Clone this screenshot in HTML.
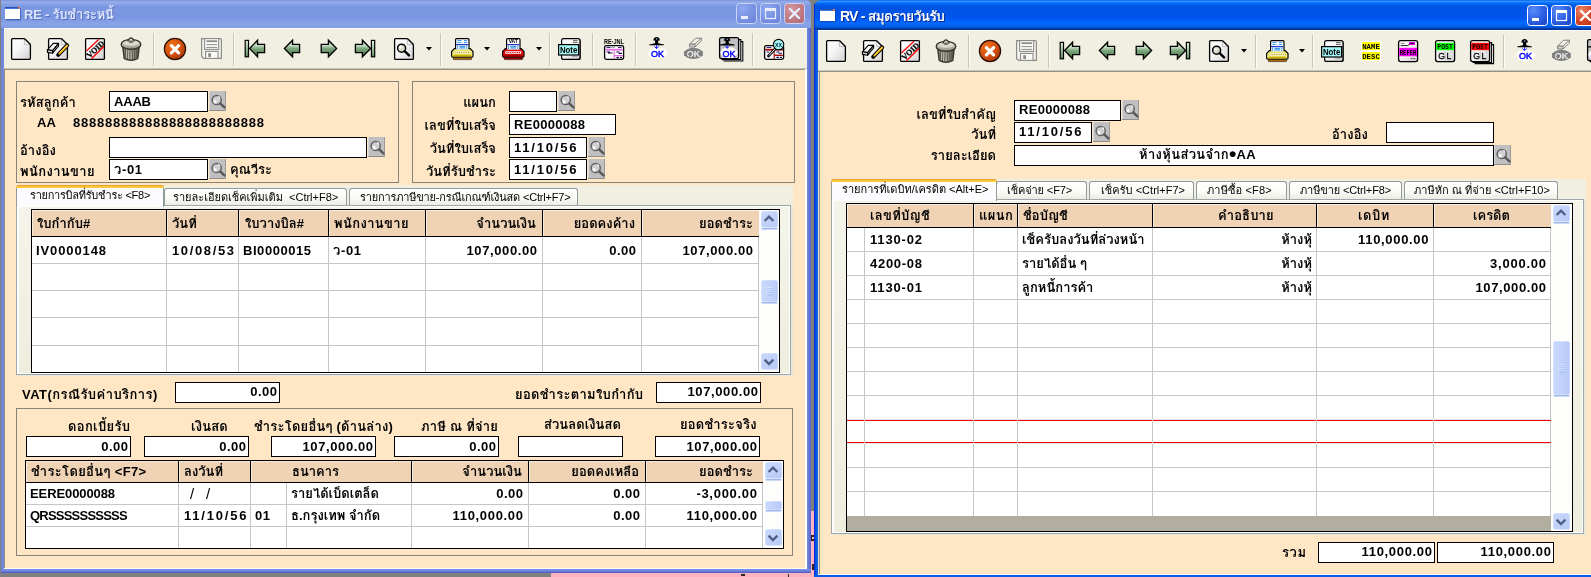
<!DOCTYPE html>
<html lang="th"><head><meta charset="utf-8"><title>RE - รับชำระหนี้ / RV - สมุดรายวันรับ</title>
<style>
html,body{margin:0;padding:0}
body{width:1591px;height:577px;overflow:hidden;position:relative;background:#808080;font-family:"Liberation Sans","Loma","Noto Sans Thai Looped","Noto Sans Thai UI","Noto Sans Thai","Tahoma",sans-serif;}
#root{position:absolute;left:0;top:0;width:1591px;height:577px;overflow:hidden;background:#808080;will-change:transform}
#root div{position:absolute;box-sizing:border-box}
#root svg{position:absolute;overflow:visible}
.t{font:bold 13px/16px "Liberation Sans","Loma","Noto Sans Thai Looped","Noto Sans Thai UI","Noto Sans Thai","Tahoma",sans-serif;white-space:pre;color:#000}
</style></head><body><div id="root">
<div style="left:551px;top:511px;width:1040px;height:66px;background:#FFB3C0;"></div>
<div style="left:0px;top:0px;width:811px;height:573px;background:#808080;"></div>
<div style="left:811px;top:535px;width:3px;height:6px;background:#30262a;"></div>
<div style="left:812px;top:537px;width:2px;height:2px;background:#FFB3C0;"></div>
<div style="left:812px;top:564px;width:2px;height:6px;background:#30262a;"></div>
<div style="left:741px;top:574px;width:4px;height:2px;background:#30262a;"></div>
<div style="left:788px;top:574px;width:1px;height:3px;background:#30262a;"></div>
<div style="left:1px;top:0px;width:810px;height:573px;border-radius:0 5px 0 0;background:linear-gradient(to right,#6E83D6,#7489DA 3px,#7389DE 806px,#5563CC 810px);"></div>
<div style="left:1px;top:569px;width:810px;height:4px;background:linear-gradient(#7B93E4,#6F83DC 50%,#4A55C4);"></div>
<div style="left:1px;top:0px;width:810px;height:28px;border-radius:0 5px 0 0;background:linear-gradient(to bottom,#7A92DC 0,#98AEEA 7%,#8AA3E6 14%,#7C97E1 24%,#7A95E0 60%,#8AA4E8 86%,#829BE3 100%);"></div>
<svg style="left:5px;top:7px" width="17" height="14" viewBox="0 0 17 14"><rect x="1" y="1.5" width="15" height="12" fill="#1A3E9E" opacity=".55"/><rect x="0" y="0" width="15" height="12" fill="#fff"/><rect x="0" y="0" width="15" height="2" fill="#3A78E0"/><rect x="0" y="0" width="15" height="1" fill="#2A50B0"/><rect x="13" y="0" width="2" height="1.6" fill="#E8703A"/></svg>
<div class="t" style="top:7px;left:24px;letter-spacing:-0.23px;color:#DDE6FA;text-shadow:1px 1px 0 rgba(60,80,170,.6);">RE - รับชำระหนี้</div>
<svg style="left:736px;top:3px" width="21" height="21" viewBox="0 0 21 21"><defs><radialGradient id="tbmin0" cx=".3" cy=".25" r=".9"><stop offset="0" stop-color="#8FA8EE"/><stop offset=".55" stop-color="#7A93E4"/><stop offset="1" stop-color="#6C84DA"/></radialGradient></defs><rect x="0.5" y="0.5" width="20" height="20" rx="3" fill="url(#tbmin0)" stroke="#C9D6F6" stroke-width="1"/><rect x="5" y="13" width="7" height="3" fill="#E8EEFC"/></svg>
<svg style="left:760px;top:3px" width="21" height="21" viewBox="0 0 21 21"><defs><radialGradient id="tbmax0" cx=".3" cy=".25" r=".9"><stop offset="0" stop-color="#8FA8EE"/><stop offset=".55" stop-color="#7A93E4"/><stop offset="1" stop-color="#6C84DA"/></radialGradient></defs><rect x="0.5" y="0.5" width="20" height="20" rx="3" fill="url(#tbmax0)" stroke="#C9D6F6" stroke-width="1"/><rect x="5.5" y="6.5" width="10" height="9" fill="none" stroke="#E8EEFC" stroke-width="1.2"/><rect x="5" y="5" width="11" height="3" fill="#E8EEFC"/></svg>
<svg style="left:784px;top:3px" width="21" height="21" viewBox="0 0 21 21"><defs><radialGradient id="tbclose0" cx=".3" cy=".25" r=".9"><stop offset="0" stop-color="#D4949C"/><stop offset=".55" stop-color="#C27C86"/><stop offset="1" stop-color="#B46C78"/></radialGradient></defs><rect x="0.5" y="0.5" width="20" height="20" rx="3" fill="url(#tbclose0)" stroke="#C9D6F6" stroke-width="1"/><path d="M6 6 L15 15 M15 6 L6 15" stroke="#E8EEFC" stroke-width="2.4" stroke-linecap="round"/></svg>
<div style="left:4px;top:28px;width:803px;height:541px;background:#FFE7C6;"></div>
<div style="left:4px;top:28px;width:803px;height:40px;background:#F1EFE2;"></div>
<div style="left:4px;top:28px;width:803px;height:1px;background:#FFFFFF;"></div>
<div style="left:4px;top:68px;width:803px;height:1px;background:#C9C6B6;"></div>
<div style="left:4px;top:69px;width:803px;height:1px;background:#8F8F86;"></div>
<div style="left:4px;top:70px;width:1px;height:498px;background:#8F8F86;"></div>
<div style="left:805px;top:69px;width:2px;height:500px;background:#FFFFFF;"></div>
<div style="left:4px;top:568px;width:803px;height:1px;background:#FFFFFF;"></div>
<svg style="left:4px;top:28px" width="803" height="41" viewBox="4 28 803 41"><defs><linearGradient id="pg" x1="0" y1="0" x2="1" y2="1"><stop offset="0" stop-color="#FFFFFF"/><stop offset=".45" stop-color="#F6F6F6"/><stop offset="1" stop-color="#CFCFCF"/></linearGradient><linearGradient id="gr" x1="0" y1="0" x2="0" y2="1"><stop offset="0" stop-color="#5E8A5E"/><stop offset=".28" stop-color="#CFE3CF"/><stop offset=".5" stop-color="#7FA87F"/><stop offset="1" stop-color="#3F6B3F"/></linearGradient><linearGradient id="gb" x1="0" y1="0" x2="0" y2="1"><stop offset="0" stop-color="#E8F2E8"/><stop offset=".45" stop-color="#A8C8A8"/><stop offset="1" stop-color="#5C885C"/></linearGradient><radialGradient id="rx" cx=".35" cy=".3" r=".8"><stop offset="0" stop-color="#F0701A"/><stop offset=".6" stop-color="#D04E10"/><stop offset="1" stop-color="#9C3206"/></radialGradient><linearGradient id="tr" x1="0" y1="0" x2="1" y2="0"><stop offset="0" stop-color="#55544A"/><stop offset=".28" stop-color="#CFCDBF"/><stop offset=".6" stop-color="#9E9C8E"/><stop offset="1" stop-color="#4A493F"/></linearGradient><linearGradient id="tl" x1="0" y1="0" x2="0" y2="1"><stop offset="0" stop-color="#ECEADD"/><stop offset="1" stop-color="#8F8D7F"/></linearGradient></defs><path d="M12.6 38.6 H24.4 L30.4 44.6 V58.4 Q30.4 59.4 29.4 59.4 H12.6 Q11.6 59.4 11.6 58.4 V39.6 Q11.6 38.6 12.6 38.6 Z" fill="url(#pg)" stroke="#000" stroke-width="1.3"/><path d="M24.4 38.6 V44.6 H30.4 Z" fill="#F4F4F4" stroke="#9A9A9A" stroke-width=".6"/><path d="M24.4 38.6 L30.4 44.6" stroke="#000" stroke-width="1.3"/><path d="M49.6 38.6 H61.400000000000006 L67.4 44.6 V58.4 Q67.4 59.4 66.4 59.4 H49.6 Q48.6 59.4 48.6 58.4 V39.6 Q48.6 38.6 49.6 38.6 Z" fill="url(#pg)" stroke="#000" stroke-width="1.3"/><path d="M61.400000000000006 38.6 V44.6 H67.4 Z" fill="#F4F4F4" stroke="#9A9A9A" stroke-width=".6"/><path d="M61.400000000000006 38.6 L67.4 44.6" stroke="#000" stroke-width="1.3"/><path d="M47.4 49.8 L53.2 43.4 H58.6 L52.6 50.6 Z" fill="#F6F6F6" stroke="#000" stroke-width="1.1" stroke-linejoin="round"/><path d="M47.4 49.8 L52.6 50.6 V53.2 L47.4 52.4 Z" fill="#D4D4D4" stroke="#000" stroke-width="1.1" stroke-linejoin="round"/><path d="M52.6 53.2 L58.6 46 V43.4 L52.6 50.6 Z" fill="#BDBDBD" stroke="#000" stroke-width="1.1" stroke-linejoin="round"/><path d="M58.2 54.8 L67.2 45.4" stroke="#000" stroke-width="4" stroke-linecap="round"/><path d="M59.4 53.6 L67.2 45.5" stroke="#F5B914" stroke-width="2" stroke-linecap="round"/><path d="M59.8 52.6 L66.6 45.4" stroke="#FFE27A" stroke-width=".7"/><path d="M86.6 38.6 H103.4 Q104.4 38.6 104.4 39.6 V58.4 Q104.4 59.4 103.4 59.4 H86.6 Q85.6 59.4 85.6 58.4 V39.6 Q85.6 38.6 86.6 38.6 Z" fill="url(#pg)" stroke="#000" stroke-width="1.3"/><path d="M86.4 51 L99 39.2" stroke="#FF1010" stroke-width="1.5"/><path d="M91.4 58.8 L104 46.4" stroke="#FF1010" stroke-width="1.5"/><text x="95.6" y="49.4" transform="rotate(-44 95.6 49.4)" text-anchor="middle" dominant-baseline="central" font-family="'Liberation Serif',serif" font-weight="bold" font-size="8" letter-spacing=".1" fill="#000" stroke="#000" stroke-width=".25">VOID</text><path d="M122.8 47 L124.2 58.4 Q131 62.2 137.8 58.4 L139.2 47 Z" fill="url(#tr)" stroke="#35342C" stroke-width="1.4"/><path d="M125.6 49.4 L125.3 59.4" stroke="#5A594F" stroke-width="1"/><path d="M127.8 49.4 L127.5 59.4" stroke="#5A594F" stroke-width="1"/><path d="M130.0 49.4 L129.7 59.4" stroke="#5A594F" stroke-width="1"/><path d="M132.2 49.4 L132.5 59.4" stroke="#5A594F" stroke-width="1"/><path d="M134.4 49.4 L134.7 59.4" stroke="#5A594F" stroke-width="1"/><path d="M136.6 49.4 L136.9 59.4" stroke="#5A594F" stroke-width="1"/><ellipse cx="131" cy="44.4" rx="9.8" ry="4.9" fill="url(#tl)" stroke="#35342C" stroke-width="1.4"/><ellipse cx="131" cy="43" rx="7.6" ry="3" fill="#E3E1D4" opacity=".7"/><path d="M127.6 41.4 Q131 34.4 134.4 41.4" fill="#D8D6C8" stroke="#35342C" stroke-width="1.4"/><ellipse cx="131" cy="41.8" rx="2.4" ry="1.3" fill="#6E6D62"/><rect x="153" y="33" width="1" height="33" fill="#C9C6B6"/><rect x="154" y="33" width="1" height="33" fill="#FBFAF4"/><circle cx="175" cy="49" r="10.6" fill="url(#rx)" stroke="#2A0E00" stroke-width="1.2"/><path d="M171.4 45.6 L178.6 52.8 M178.6 45.6 L171.4 52.8" stroke="#fff" stroke-width="3.2" stroke-linecap="round"/><path d="M201.6 38.6 H220.4 Q221.4 38.6 221.4 39.6 V58.4 H203.6 L201.6 56.4 Z" fill="#F4F3EA" stroke="#8C8C8C" stroke-width="1.2"/><rect x="204.6" y="38.6" width="14" height="10.8" fill="#FAFAF6" stroke="#8C8C8C" stroke-width="1.1"/><path d="M206.4 41.2 H217" stroke="#8C8C8C" stroke-width="1.8"/><path d="M206.4 44.6 H217 M206.4 47.4 H217" stroke="#8C8C8C" stroke-width="1"/><rect x="205.6" y="51.4" width="12.4" height="7" fill="#FAFAF6" stroke="#8C8C8C" stroke-width="1.1"/><rect x="208.2" y="53.2" width="2.8" height="3.8" fill="#8C8C8C"/><rect x="233" y="33" width="1" height="33" fill="#C9C6B6"/><rect x="234" y="33" width="1" height="33" fill="#FBFAF4"/><path d="M249.6 48.5 L257.6 40.2 V44.4 H264.6 V52.6 H257.6 V56.8 Z" fill="url(#gr)" stroke="#000" stroke-width="1.3" stroke-linejoin="miter"/><rect x="245.2" y="40.4" width="3.3" height="16.4" fill="url(#gb)" stroke="#000" stroke-width="1.2"/><path d="M284.4 48.5 L292.6 40.2 V44.4 H299.6 V52.6 H292.6 V56.8 Z" fill="url(#gr)" stroke="#000" stroke-width="1.3" stroke-linejoin="miter"/><path d="M336.6 48.5 L328.4 40.2 V44.4 H321.2 V52.6 H328.4 V56.8 Z" fill="url(#gr)" stroke="#000" stroke-width="1.3" stroke-linejoin="miter"/><path d="M370.6 48.5 L362.4 40.2 V44.4 H355.4 V52.6 H362.4 V56.8 Z" fill="url(#gr)" stroke="#000" stroke-width="1.3" stroke-linejoin="miter"/><rect x="371.40000000000003" y="40.4" width="3.3" height="16.4" fill="url(#gb)" stroke="#000" stroke-width="1.2"/><path d="M395.6 38.6 H407.4 L413.4 44.6 V58.4 Q413.4 59.4 412.4 59.4 H395.6 Q394.6 59.4 394.6 58.4 V39.6 Q394.6 38.6 395.6 38.6 Z" fill="url(#pg)" stroke="#000" stroke-width="1.3"/><path d="M407.4 38.6 V44.6 H413.4 Z" fill="#F4F4F4" stroke="#9A9A9A" stroke-width=".6"/><path d="M407.4 38.6 L413.4 44.6" stroke="#000" stroke-width="1.3"/><circle cx="401.6" cy="48.2" r="4" fill="#D9DACB" stroke="#000" stroke-width="1.5"/><circle cx="400.6" cy="47.2" r="1.6" fill="#F6F6EE" opacity=".9"/><path d="M404.6 51.2 L409 55.4" stroke="#000" stroke-width="2.4" stroke-linecap="round"/><path d="M426 47 H432 L429 50.4 Z" fill="#000"/><rect x="440" y="33" width="1" height="33" fill="#C9C6B6"/><rect x="441" y="33" width="1" height="33" fill="#FBFAF4"/><rect x="455.6" y="38.6" width="13.4" height="11" rx="1" fill="#fff" stroke="#000" stroke-width="1.2"/><path d="M457.4 40.6 H461.4 M464 40.6 H467.2 M457.4 42.6 H460.4 M461.6 42.6 H462.4 M464 42.6 H467.2" stroke="#2A96E8" stroke-width="1"/><rect x="456.2" y="44" width="12.2" height="1.2" fill="#2A34C8"/><path d="M457.6 45.4 V48.6 M466.8 45.4 V48.6" stroke="#2A96E8" stroke-width="1"/><rect x="459.4" y="45.8" width="5.8" height="2.6" fill="#3E9CE6"/><path d="M454.4 48.6 H470.2 L473 51.6 V56 Q473 57.2 471.6 57.2 H453 Q451.6 57.2 451.6 56 V51.6 Z" fill="#F8F27E" stroke="#000" stroke-width="1.2"/><rect x="455.6" y="38.9" width="13.4" height="10.4" fill="none"/><rect x="456.2" y="46" width="12.2" height="3.2" fill="#fff" opacity="0"/><path d="M453.2 55.6 H471.4" stroke="#C7B200" stroke-width="1.6"/><rect x="454" y="51" width="16.4" height="3" rx=".6" fill="#fff" stroke="#C7B200" stroke-width=".5"/><path d="M455.4 52.5 H469.2" stroke="#C0A000" stroke-width="1" stroke-dasharray="1 .8"/><rect x="453.2" y="57.6" width="18.4" height="2" rx=".6" fill="#B86E00" stroke="#000" stroke-width=".5"/><rect x="456.2" y="47.6" width="12.2" height="2" fill="#fff"/><path d="M457.6 47.6 V49 M466.8 47.6 V49" stroke="#2A96E8" stroke-width="1"/><rect x="459.4" y="47.6" width="5.8" height="1" fill="#3E9CE6"/><path d="M484 47 H490 L487 50.4 Z" fill="#000"/><rect x="506.6" y="38.6" width="13.4" height="11" rx="1" fill="#fff" stroke="#000" stroke-width="1.2"/><text x="513.3" y="43.2" text-anchor="middle" font-family="'Liberation Sans',sans-serif" font-weight="bold" font-size="5" fill="#000">VAT</text><rect x="507.2" y="44" width="12.2" height="1.2" fill="#2A34C8"/><path d="M508.6 45.4 V48.6 M517.8 45.4 V48.6" stroke="#2A96E8" stroke-width="1"/><rect x="510.4" y="45.8" width="5.8" height="2.6" fill="#3E9CE6"/><path d="M505.4 48.6 H521.2 L524 51.6 V56 Q524 57.2 522.6 57.2 H504 Q502.6 57.2 502.6 56 V51.6 Z" fill="#F40808" stroke="#000" stroke-width="1.2"/><rect x="506.6" y="38.9" width="13.4" height="10.4" fill="none"/><rect x="507.2" y="46" width="12.2" height="3.2" fill="#fff" opacity="0"/><path d="M504.2 55.6 H522.4" stroke="#A00000" stroke-width="1.6"/><rect x="505" y="51" width="16.4" height="3" rx=".6" fill="#fff" stroke="#A00000" stroke-width=".5"/><path d="M506.4 52.5 H520.2" stroke="#E00000" stroke-width="1" stroke-dasharray="1 .8"/><rect x="504.2" y="57.6" width="18.4" height="2" rx=".6" fill="#A80000" stroke="#000" stroke-width=".5"/><rect x="507.2" y="47.6" width="12.2" height="2" fill="#fff"/><path d="M508.6 47.6 V49 M517.8 47.6 V49" stroke="#2A96E8" stroke-width="1"/><rect x="510.4" y="47.6" width="5.8" height="1" fill="#3E9CE6"/><path d="M536 47 H542 L539 50.4 Z" fill="#000"/><rect x="549" y="33" width="1" height="33" fill="#C9C6B6"/><rect x="550" y="33" width="1" height="33" fill="#FBFAF4"/><rect x="563" y="39" width="18" height="21" rx="2" fill="#555"/><rect x="561.6" y="38.6" width="18.4" height="20.8" rx="2" fill="url(#pg)" stroke="#000" stroke-width="1.2"/><path d="M573 40.6 H577.6 M573 42.4 H577.6" stroke="#555" stroke-width=".9"/><path d="M572 56.4 H577.6" stroke="#999" stroke-width=".8"/><rect x="558.6" y="44.6" width="20" height="10.4" fill="#A4F4F4" stroke="#000" stroke-width="1.2"/><text x="568.6" y="53.2" text-anchor="middle" font-family="'Liberation Sans',sans-serif" font-weight="bold" font-size="9.6" textLength="17.4" lengthAdjust="spacingAndGlyphs" fill="#000">Note</text><rect x="592" y="33" width="1" height="33" fill="#C9C6B6"/><rect x="593" y="33" width="1" height="33" fill="#FBFAF4"/><text x="614" y="44" text-anchor="middle" font-family="'Liberation Sans',sans-serif" font-weight="bold" font-size="6.6" textLength="20" lengthAdjust="spacingAndGlyphs" fill="#000">RE·JNL</text><rect x="604.6" y="45.6" width="19" height="13.8" rx="1.8" fill="#fff" stroke="#000" stroke-width="1.3"/><rect x="605.4" y="48.8" width="17.4" height="1.8" fill="#E46AE4"/><rect x="613.6" y="50.6" width="1.1" height="8.2" fill="#E46AE4"/><rect x="614.4" y="55" width="8.4" height="1.4" fill="#E46AE4"/><path d="M606.6 47.4 H610.4 M611.6 47.4 H612.4 M613.6 47.4 H614.4 M618 47.4 H621.6" stroke="#1A1A60" stroke-width="1"/><path d="M606.6 52 H610 M608 53 H612.6 M616.4 52 H619.4 M618.6 53.4 H622" stroke="#101040" stroke-width="1.1"/><path d="M616.4 57.6 H619 M620 57.6 H622" stroke="#101040" stroke-width="1.1"/><rect x="635" y="33" width="1" height="33" fill="#C9C6B6"/><rect x="636" y="33" width="1" height="33" fill="#FBFAF4"/><ellipse cx="657.6" cy="53.2" rx="9.6" ry="5.8" fill="#fff"/><path d="M654.0 38.2 Q656.6 35.8 659.2 38.2 L660.0 40.6 H658.2 V43.2 L664.0 44.4 V45.2 H649.2 V44.4 L655.0 43.2 V40.6 H653.2 Z" fill="#000"/><rect x="656.0" y="38.4" width="1.2" height="1.2" fill="#9CC8F8"/><path d="M656.6 45.2 V48.4 M654.4 46.4 L656.6 48.6 L658.8000000000001 46.4" stroke="#0000FF" stroke-width=".9" fill="none"/><text x="657.6" y="56.8" text-anchor="middle" font-family="'Liberation Sans',sans-serif" font-size="9.2" textLength="13" lengthAdjust="spacingAndGlyphs" fill="#0000FF" stroke="#0000FF" stroke-width=".45">OK</text><ellipse cx="693.4" cy="53.4" rx="9.4" ry="5.6" fill="#808080"/><circle cx="684.8" cy="52" r="1" fill="#808080"/><circle cx="684.8" cy="55" r="1" fill="#808080"/><circle cx="702" cy="52" r="1" fill="#808080"/><circle cx="702" cy="55" r="1" fill="#808080"/><path d="M689.6 44.2 L695.6 38.2 H701.4 L695 44.2 Z" fill="#F1EFE2" stroke="#808080" stroke-width="1"/><path d="M689.6 44.2 H695 V47 H689.6 Z" fill="#D8D6CC" stroke="#808080" stroke-width="1"/><path d="M695 47 L701.4 41 V38.2" fill="none" stroke="#808080" stroke-width="1"/><text x="693.6" y="57.2" text-anchor="middle" font-family="'Liberation Sans',sans-serif" font-weight="bold" font-size="9.4" textLength="13.6" lengthAdjust="spacingAndGlyphs" fill="#EEEEEA">OK</text><path d="M689.8 57 V53.6 M688.2 54.8 L689.8 53.2 L691.4 54.8" stroke="#808080" stroke-width="1.1" fill="none"/><path d="M723.6 41.6 H742.8 V61 H723.6" fill="#fff" stroke="#000" stroke-width="1.1"/><path d="M721.6 39.6 H740.8 V59.6 H721.6" fill="#E6E6E6" stroke="#000" stroke-width="1.1"/><rect x="719.6" y="37.6" width="19" height="21" rx="1.6" fill="#C2C2C2" stroke="#000" stroke-width="1.3"/><ellipse cx="729" cy="52.6" rx="8.6" ry="5.6" fill="#fff"/><path d="M724.6 38.400000000000006 Q727.2 36.0 729.8000000000001 38.400000000000006 L730.6 40.800000000000004 H728.8000000000001 V43.400000000000006 L734.6 44.6 V45.400000000000006 H719.8000000000001 V44.6 L725.6 43.400000000000006 V40.800000000000004 H723.8000000000001 Z" fill="#000"/><rect x="726.6" y="38.6" width="1.2" height="1.2" fill="#9CC8F8"/><path d="M727.2 45.4 V48.2 M725.2 46.4 L727.2 48.4 L729.2 46.4" stroke="#0000FF" stroke-width=".9" fill="none"/><text x="729" y="56.6" text-anchor="middle" font-family="'Liberation Sans',sans-serif" font-size="9.2" textLength="13" lengthAdjust="spacingAndGlyphs" fill="#0000FF" stroke="#0000FF" stroke-width=".45">OK</text><rect x="752" y="33" width="1" height="33" fill="#C9C6B6"/><rect x="753" y="33" width="1" height="33" fill="#FBFAF4"/><rect x="764.6" y="45.6" width="19" height="13.8" rx="1.8" fill="#fff" stroke="#000" stroke-width="1.3"/><rect x="765.4" y="48.8" width="17.4" height="1.8" fill="#A80000"/><rect x="773.6" y="50.6" width="1.1" height="8.2" fill="#A80000"/><rect x="774.4" y="54.6" width="8.4" height="1.4" fill="#A80000"/><path d="M766.6 47.4 H771.4" stroke="#1A1A80" stroke-width="1"/><path d="M766.6 52 H769 M776.4 52 H779.4 M778.6 53.2 H782 M776.4 57.4 H779 M780 57.4 H782" stroke="#101060" stroke-width="1.1"/><path d="M768.4 56 L775.4 48.6" stroke="#000" stroke-width="2.6" stroke-linecap="round"/><path d="M769.2 55.2 L775.4 48.6" stroke="#fff" stroke-width="1" stroke-linecap="round"/><circle cx="778.6" cy="44.6" r="5.2" fill="#A4F2F2" stroke="#000" stroke-width="1.1"/><text x="778.6" y="46.8" text-anchor="middle" font-family="'Liberation Sans',sans-serif" font-weight="bold" font-size="6.4" fill="#104050">xx</text></svg>
<div style="left:16px;top:81px;width:383px;height:102px;border:1px solid #85837A;"></div>
<div style="left:412px;top:81px;width:383px;height:102px;border:1px solid #85837A;"></div>
<div class="t" style="top:95px;left:20px;letter-spacing:0.08px;">รหัสลูกค้า</div>
<div style="left:109px;top:91px;width:99px;height:21px;background:#fff;box-shadow:inset 0 0 0 1px #000;"></div>
<div class="t" style="top:94px;left:114px;letter-spacing:-0.19px;">AAAB</div>
<svg style="left:209px;top:91px" width="17" height="20" viewBox="0 0 17 20"><rect x="0" y="0" width="17" height="20" fill="#C0C0C0"/><rect x="0" y="0" width="1" height="20" fill="#D6D6D6"/><rect x="0" y="19" width="17" height="1" fill="#8E8E8E"/><rect x="16" y="0" width="1" height="20" fill="#9A9A9A"/><circle cx="7.7" cy="9" r="4.6" fill="#CFCFCF" stroke="#626262" stroke-width="1.5"/><path d="M8.4 5 L11 5.8 L11.2 8 Z" fill="#fff"/><rect x="4.8" y="9.2" width="2.6" height="3.2" fill="#FAFAFA"/><path d="M11.2 12.4 L15.4 16.4" stroke="#5A5A5A" stroke-width="2.6" stroke-linecap="round"/></svg>
<div class="t" style="top:115px;left:37px;letter-spacing:0.22px;">AA</div>
<div class="t" style="top:115px;left:73px;letter-spacing:0.76px;">888888888888888888888888</div>
<div class="t" style="top:143px;left:20px;letter-spacing:0.06px;">อ้างอิง</div>
<div style="left:109px;top:137px;width:258px;height:21px;background:#fff;box-shadow:inset 0 0 0 1px #000;"></div>
<svg style="left:368px;top:137px" width="17" height="20" viewBox="0 0 17 20"><rect x="0" y="0" width="17" height="20" fill="#C0C0C0"/><rect x="0" y="0" width="1" height="20" fill="#D6D6D6"/><rect x="0" y="19" width="17" height="1" fill="#8E8E8E"/><rect x="16" y="0" width="1" height="20" fill="#9A9A9A"/><circle cx="7.7" cy="9" r="4.6" fill="#CFCFCF" stroke="#626262" stroke-width="1.5"/><path d="M8.4 5 L11 5.8 L11.2 8 Z" fill="#fff"/><rect x="4.8" y="9.2" width="2.6" height="3.2" fill="#FAFAFA"/><path d="M11.2 12.4 L15.4 16.4" stroke="#5A5A5A" stroke-width="2.6" stroke-linecap="round"/></svg>
<div class="t" style="top:164px;left:20px;letter-spacing:0.37px;">พนักงานขาย</div>
<div style="left:109px;top:159px;width:99px;height:21px;background:#fff;box-shadow:inset 0 0 0 1px #000;"></div>
<div class="t" style="top:162px;left:114px;letter-spacing:0.64px;">ว-01</div>
<svg style="left:209px;top:159px" width="17" height="20" viewBox="0 0 17 20"><rect x="0" y="0" width="17" height="20" fill="#C0C0C0"/><rect x="0" y="0" width="1" height="20" fill="#D6D6D6"/><rect x="0" y="19" width="17" height="1" fill="#8E8E8E"/><rect x="16" y="0" width="1" height="20" fill="#9A9A9A"/><circle cx="7.7" cy="9" r="4.6" fill="#CFCFCF" stroke="#626262" stroke-width="1.5"/><path d="M8.4 5 L11 5.8 L11.2 8 Z" fill="#fff"/><rect x="4.8" y="9.2" width="2.6" height="3.2" fill="#FAFAFA"/><path d="M11.2 12.4 L15.4 16.4" stroke="#5A5A5A" stroke-width="2.6" stroke-linecap="round"/></svg>
<div class="t" style="top:162px;left:230px;letter-spacing:-0.01px;">คุณวีระ</div>
<div class="t" style="top:95px;right:1095px;">แผนก</div>
<div style="left:509px;top:91px;width:48px;height:21px;background:#fff;box-shadow:inset 0 0 0 1px #000;"></div>
<svg style="left:558px;top:91px" width="17" height="20" viewBox="0 0 17 20"><rect x="0" y="0" width="17" height="20" fill="#C0C0C0"/><rect x="0" y="0" width="1" height="20" fill="#D6D6D6"/><rect x="0" y="19" width="17" height="1" fill="#8E8E8E"/><rect x="16" y="0" width="1" height="20" fill="#9A9A9A"/><circle cx="7.7" cy="9" r="4.6" fill="#CFCFCF" stroke="#626262" stroke-width="1.5"/><path d="M8.4 5 L11 5.8 L11.2 8 Z" fill="#fff"/><rect x="4.8" y="9.2" width="2.6" height="3.2" fill="#FAFAFA"/><path d="M11.2 12.4 L15.4 16.4" stroke="#5A5A5A" stroke-width="2.6" stroke-linecap="round"/></svg>
<div class="t" style="top:118px;right:1095px;">เลขที่ใบเสร็จ</div>
<div style="left:509px;top:114px;width:107px;height:21px;background:#fff;box-shadow:inset 0 0 0 1px #000;"></div>
<div class="t" style="top:117px;left:514px;letter-spacing:0.29px;">RE0000088</div>
<div class="t" style="top:141px;right:1095px;">วันที่ใบเสร็จ</div>
<div style="left:509px;top:137px;width:78px;height:21px;background:#fff;box-shadow:inset 0 0 0 1px #000;"></div>
<div class="t" style="top:140px;left:514px;letter-spacing:1.8px;">11/10/56</div>
<svg style="left:588px;top:137px" width="17" height="20" viewBox="0 0 17 20"><rect x="0" y="0" width="17" height="20" fill="#C0C0C0"/><rect x="0" y="0" width="1" height="20" fill="#D6D6D6"/><rect x="0" y="19" width="17" height="1" fill="#8E8E8E"/><rect x="16" y="0" width="1" height="20" fill="#9A9A9A"/><circle cx="7.7" cy="9" r="4.6" fill="#CFCFCF" stroke="#626262" stroke-width="1.5"/><path d="M8.4 5 L11 5.8 L11.2 8 Z" fill="#fff"/><rect x="4.8" y="9.2" width="2.6" height="3.2" fill="#FAFAFA"/><path d="M11.2 12.4 L15.4 16.4" stroke="#5A5A5A" stroke-width="2.6" stroke-linecap="round"/></svg>
<div class="t" style="top:164px;right:1095px;">วันที่รับชำระ</div>
<div style="left:509px;top:159px;width:78px;height:21px;background:#fff;box-shadow:inset 0 0 0 1px #000;"></div>
<div class="t" style="top:162px;left:514px;letter-spacing:1.8px;">11/10/56</div>
<svg style="left:588px;top:159px" width="17" height="20" viewBox="0 0 17 20"><rect x="0" y="0" width="17" height="20" fill="#C0C0C0"/><rect x="0" y="0" width="1" height="20" fill="#D6D6D6"/><rect x="0" y="19" width="17" height="1" fill="#8E8E8E"/><rect x="16" y="0" width="1" height="20" fill="#9A9A9A"/><circle cx="7.7" cy="9" r="4.6" fill="#CFCFCF" stroke="#626262" stroke-width="1.5"/><path d="M8.4 5 L11 5.8 L11.2 8 Z" fill="#fff"/><rect x="4.8" y="9.2" width="2.6" height="3.2" fill="#FAFAFA"/><path d="M11.2 12.4 L15.4 16.4" stroke="#5A5A5A" stroke-width="2.6" stroke-linecap="round"/></svg>
<div style="left:16px;top:185px;width:777px;height:190px;background:#F1EFE2;"></div>
<div style="left:16px;top:205px;width:775px;height:170px;background:#FFFFFF;border:1px solid #9DA7A8;"></div>
<div style="left:19px;top:207px;width:770px;height:166px;background:linear-gradient(#F5F4EA,#EFEDDE);"></div>
<div style="left:791px;top:207px;width:2px;height:169px;background:#E9E7DA;"></div>
<div style="left:18px;top:375px;width:775px;height:1px;background:#E9E7DA;"></div>
<div style="left:164px;top:188px;width:183px;height:17px;border:1px solid #919B9C;border-bottom:none;border-radius:3px 3px 0 0;background:linear-gradient(#FFFFFF,#FAFAF6 60%,#ECEBE2);"></div>
<div class="t" style="top:189px;left:173px;font-size:11px;font-weight:normal;letter-spacing:-0.01px;">รายละเอียดเช็คเพิ่มเติม  &lt;Ctrl+F8&gt;</div>
<div style="left:349px;top:188px;width:229px;height:17px;border:1px solid #919B9C;border-bottom:none;border-radius:3px 3px 0 0;background:linear-gradient(#FFFFFF,#FAFAF6 60%,#ECEBE2);"></div>
<div class="t" style="top:189px;left:360px;font-size:11px;font-weight:normal;letter-spacing:-0.19px;">รายการภาษีขาย-กรณีเกณฑ์เงินสด &lt;Ctrl+F7&gt;</div>
<div style="left:16px;top:185px;width:148px;height:22px;background:#FCFCFE;border:1px solid #919B9C;border-bottom:none;border-radius:3px 3px 0 0;"></div>
<div style="left:16px;top:185px;width:148px;height:3px;border-radius:3px 3px 0 0;background:linear-gradient(#E68B2C,#FFC73C 50%,#FFC73C);"></div>
<div class="t" style="top:187px;left:30px;font-size:11px;font-weight:normal;letter-spacing:-0.28px;">รายการบิลที่รับชำระ &lt;F8&gt;</div>
<div style="left:31px;top:209px;width:749px;height:164px;background:#FFFFFF;border:1px solid #000;"></div>
<div style="left:32px;top:210px;width:134px;height:26px;background:#F0D2B4;box-shadow:inset 1px 1px 0 rgba(255,255,255,.55);"></div>
<div style="left:167px;top:210px;width:71px;height:26px;background:#F0D2B4;box-shadow:inset 1px 1px 0 rgba(255,255,255,.55);"></div>
<div style="left:239px;top:210px;width:89px;height:26px;background:#F0D2B4;box-shadow:inset 1px 1px 0 rgba(255,255,255,.55);"></div>
<div style="left:329px;top:210px;width:96px;height:26px;background:#F0D2B4;box-shadow:inset 1px 1px 0 rgba(255,255,255,.55);"></div>
<div style="left:426px;top:210px;width:116px;height:26px;background:#F0D2B4;box-shadow:inset 1px 1px 0 rgba(255,255,255,.55);"></div>
<div style="left:543px;top:210px;width:98px;height:26px;background:#F0D2B4;box-shadow:inset 1px 1px 0 rgba(255,255,255,.55);"></div>
<div style="left:642px;top:210px;width:117px;height:26px;background:#F0D2B4;box-shadow:inset 1px 1px 0 rgba(255,255,255,.55);"></div>
<div style="left:32px;top:236px;width:727px;height:1px;background:#000;"></div>
<div style="left:166px;top:210px;width:1px;height:27px;background:#000;"></div>
<div style="left:166px;top:237px;width:1px;height:135px;background:#C6C6C6;"></div>
<div style="left:238px;top:210px;width:1px;height:27px;background:#000;"></div>
<div style="left:238px;top:237px;width:1px;height:135px;background:#C6C6C6;"></div>
<div style="left:328px;top:210px;width:1px;height:27px;background:#000;"></div>
<div style="left:328px;top:237px;width:1px;height:135px;background:#C6C6C6;"></div>
<div style="left:425px;top:210px;width:1px;height:27px;background:#000;"></div>
<div style="left:425px;top:237px;width:1px;height:135px;background:#C6C6C6;"></div>
<div style="left:542px;top:210px;width:1px;height:27px;background:#000;"></div>
<div style="left:542px;top:237px;width:1px;height:135px;background:#C6C6C6;"></div>
<div style="left:641px;top:210px;width:1px;height:27px;background:#000;"></div>
<div style="left:641px;top:237px;width:1px;height:135px;background:#C6C6C6;"></div>
<div style="left:758px;top:237px;width:1px;height:135px;background:#C6C6C6;"></div>
<div style="left:32px;top:263px;width:727px;height:1px;background:#C6C6C6;"></div>
<div style="left:32px;top:290px;width:727px;height:1px;background:#C6C6C6;"></div>
<div style="left:32px;top:317px;width:727px;height:1px;background:#C6C6C6;"></div>
<div style="left:32px;top:345px;width:727px;height:1px;background:#C6C6C6;"></div>
<div style="left:759px;top:210px;width:20px;height:162px;background:#FDFDFB;"></div>
<svg style="left:761px;top:211px" width="17" height="19" viewBox="0 0 17 19"><defs><linearGradient id="sb" x1="0" y1="0" x2="1" y2="1"><stop offset="0" stop-color="#CBD9FC"/><stop offset="1" stop-color="#B7C9F6"/></linearGradient></defs><rect x="-0.5" y="-0.5" width="18" height="18" rx="2.5" fill="#fff"/><rect x="0.5" y="17" width="16" height="1.4" rx="0.7" fill="#9DB6EE"/><rect x="0.2" y="0.2" width="16.6" height="16.4" rx="2.2" fill="url(#sb)"/><path d="M3.6 10 L8 5.6 L12.4 10" fill="none" stroke="#4D6185" stroke-width="2.3"/></svg>
<svg style="left:761px;top:280px" width="17" height="24" viewBox="0 0 17 24"><defs><linearGradient id="st" x1="0" y1="0" x2="1" y2="0"><stop offset="0" stop-color="#CBD9FC"/><stop offset="1" stop-color="#B7C9F6"/></linearGradient></defs><rect x="-0.5" y="-0.5" width="18" height="23.5" rx="2.5" fill="#fff"/><rect x="0.5" y="22" width="16" height="1.4" rx="0.7" fill="#9DB6EE"/><rect x="0.2" y="0.2" width="16.6" height="21.6" rx="2.2" fill="url(#st)"/><rect x="5.5" y="7.5" width="6" height="1" fill="#EEF4FE"/><rect x="6" y="8.5" width="6" height="0.8" fill="#8CB0F8"/><rect x="5.5" y="9.5" width="6" height="1" fill="#EEF4FE"/><rect x="6" y="10.5" width="6" height="0.8" fill="#8CB0F8"/><rect x="5.5" y="11.5" width="6" height="1" fill="#EEF4FE"/><rect x="6" y="12.5" width="6" height="0.8" fill="#8CB0F8"/><rect x="5.5" y="13.5" width="6" height="1" fill="#EEF4FE"/><rect x="6" y="14.5" width="6" height="0.8" fill="#8CB0F8"/></svg>
<svg style="left:761px;top:353px" width="17" height="19" viewBox="0 0 17 19"><defs><linearGradient id="sb" x1="0" y1="0" x2="1" y2="1"><stop offset="0" stop-color="#CBD9FC"/><stop offset="1" stop-color="#B7C9F6"/></linearGradient></defs><rect x="-0.5" y="-0.5" width="18" height="18" rx="2.5" fill="#fff"/><rect x="0.2" y="0.2" width="16.6" height="16.4" rx="2.2" fill="url(#sb)"/><path d="M3.6 6.6 L8 11 L12.4 6.6" fill="none" stroke="#4D6185" stroke-width="2.3"/></svg>
<div class="t" style="top:216px;left:37px;">ใบกำกับ#</div>
<div class="t" style="top:216px;left:172px;">วันที่</div>
<div class="t" style="top:216px;left:245px;">ใบวางบิล#</div>
<div class="t" style="top:216px;left:334px;letter-spacing:0.37px;">พนักงานขาย</div>
<div class="t" style="top:216px;right:1055px;">จำนวนเงิน</div>
<div class="t" style="top:216px;right:956px;">ยอดคงค้าง</div>
<div class="t" style="top:216px;right:838px;">ยอดชำระ</div>
<div class="t" style="top:243px;left:36px;letter-spacing:0.89px;">IV0000148</div>
<div class="t" style="top:243px;left:172px;letter-spacing:1.63px;">10/08/53</div>
<div class="t" style="top:243px;left:243px;letter-spacing:0.55px;">BI0000015</div>
<div class="t" style="top:243px;left:333px;letter-spacing:0.64px;">ว-01</div>
<div class="t" style="top:243px;right:1053.4px;letter-spacing:0.6px;">107,000.00</div>
<div class="t" style="top:243px;right:954.5px;letter-spacing:0.5px;">0.00</div>
<div class="t" style="top:243px;right:837.4px;letter-spacing:0.6px;">107,000.00</div>
<div class="t" style="top:387px;left:22px;letter-spacing:0.44px;">VAT(กรณีรับค่าบริการ)</div>
<div style="left:175px;top:382px;width:105px;height:21px;background:#fff;box-shadow:inset 0 0 0 1px #000;"></div>
<div class="t" style="top:384px;right:1313.5px;letter-spacing:0.5px;">0.00</div>
<div class="t" style="top:387px;left:515px;letter-spacing:0.3px;">ยอดชำระตามใบกำกับ</div>
<div style="left:656px;top:382px;width:105px;height:21px;background:#fff;box-shadow:inset 0 0 0 1px #000;"></div>
<div class="t" style="top:384px;right:832.4px;letter-spacing:0.6px;">107,000.00</div>
<div style="left:16px;top:408px;width:777px;height:148px;border:1px solid #85837A;"></div>
<div class="t" style="top:419px;left:68px;letter-spacing:0.33px;">ดอกเบี้ยรับ</div>
<div class="t" style="top:419px;left:191px;letter-spacing:0.19px;">เงินสด</div>
<div class="t" style="top:419px;left:254px;letter-spacing:0.21px;">ชำระโดยอื่นๆ (ด้านล่าง)</div>
<div class="t" style="top:419px;left:421px;letter-spacing:0.24px;">ภาษี ณ ที่จ่าย</div>
<div class="t" style="top:417px;left:544px;letter-spacing:0.04px;">ส่วนลดเงินสด</div>
<div class="t" style="top:417px;left:680px;letter-spacing:0.21px;">ยอดชำระจริง</div>
<div style="left:26px;top:436px;width:105px;height:21px;background:#fff;box-shadow:inset 0 0 0 1px #000;"></div>
<div class="t" style="top:439px;right:1462.5px;letter-spacing:0.5px;">0.00</div>
<div style="left:144px;top:436px;width:105px;height:21px;background:#fff;box-shadow:inset 0 0 0 1px #000;"></div>
<div class="t" style="top:439px;right:1344.5px;letter-spacing:0.5px;">0.00</div>
<div style="left:271px;top:436px;width:105px;height:21px;background:#fff;box-shadow:inset 0 0 0 1px #000;"></div>
<div class="t" style="top:439px;right:1217.4px;letter-spacing:0.6px;">107,000.00</div>
<div style="left:394px;top:436px;width:105px;height:21px;background:#fff;box-shadow:inset 0 0 0 1px #000;"></div>
<div class="t" style="top:439px;right:1094.5px;letter-spacing:0.5px;">0.00</div>
<div style="left:518px;top:436px;width:105px;height:21px;background:#fff;box-shadow:inset 0 0 0 1px #000;"></div>
<div style="left:655px;top:436px;width:105px;height:21px;background:#fff;box-shadow:inset 0 0 0 1px #000;"></div>
<div class="t" style="top:439px;right:833.4px;letter-spacing:0.6px;">107,000.00</div>
<div style="left:25px;top:460px;width:759px;height:89px;background:#FFFFFF;border:1px solid #000;"></div>
<div style="left:26px;top:461px;width:152px;height:21px;background:#F0D2B4;box-shadow:inset 1px 1px 0 rgba(255,255,255,.55);"></div>
<div style="left:179px;top:461px;width:71px;height:21px;background:#F0D2B4;box-shadow:inset 1px 1px 0 rgba(255,255,255,.55);"></div>
<div style="left:251px;top:461px;width:160px;height:21px;background:#F0D2B4;box-shadow:inset 1px 1px 0 rgba(255,255,255,.55);"></div>
<div style="left:412px;top:461px;width:116px;height:21px;background:#F0D2B4;box-shadow:inset 1px 1px 0 rgba(255,255,255,.55);"></div>
<div style="left:529px;top:461px;width:116px;height:21px;background:#F0D2B4;box-shadow:inset 1px 1px 0 rgba(255,255,255,.55);"></div>
<div style="left:646px;top:461px;width:117px;height:21px;background:#F0D2B4;box-shadow:inset 1px 1px 0 rgba(255,255,255,.55);"></div>
<div style="left:26px;top:482px;width:737px;height:1px;background:#000;"></div>
<div style="left:178px;top:461px;width:1px;height:22px;background:#000;"></div>
<div style="left:178px;top:483px;width:1px;height:65px;background:#C6C6C6;"></div>
<div style="left:250px;top:461px;width:1px;height:22px;background:#000;"></div>
<div style="left:250px;top:483px;width:1px;height:65px;background:#C6C6C6;"></div>
<div style="left:411px;top:461px;width:1px;height:22px;background:#000;"></div>
<div style="left:411px;top:483px;width:1px;height:65px;background:#C6C6C6;"></div>
<div style="left:528px;top:461px;width:1px;height:22px;background:#000;"></div>
<div style="left:528px;top:483px;width:1px;height:65px;background:#C6C6C6;"></div>
<div style="left:645px;top:461px;width:1px;height:22px;background:#000;"></div>
<div style="left:645px;top:483px;width:1px;height:65px;background:#C6C6C6;"></div>
<div style="left:286px;top:483px;width:1px;height:65px;background:#C6C6C6;"></div>
<div style="left:762px;top:483px;width:1px;height:65px;background:#C6C6C6;"></div>
<div style="left:26px;top:504px;width:737px;height:1px;background:#C6C6C6;"></div>
<div style="left:26px;top:526px;width:737px;height:1px;background:#C6C6C6;"></div>
<div style="left:763px;top:461px;width:20px;height:87px;background:#FDFDFB;"></div>
<svg style="left:765px;top:462px" width="17" height="19" viewBox="0 0 17 19"><defs><linearGradient id="sb" x1="0" y1="0" x2="1" y2="1"><stop offset="0" stop-color="#CBD9FC"/><stop offset="1" stop-color="#B7C9F6"/></linearGradient></defs><rect x="-0.5" y="-0.5" width="18" height="18" rx="2.5" fill="#fff"/><rect x="0.5" y="17" width="16" height="1.4" rx="0.7" fill="#9DB6EE"/><rect x="0.2" y="0.2" width="16.6" height="16.4" rx="2.2" fill="url(#sb)"/><path d="M3.6 10 L8 5.6 L12.4 10" fill="none" stroke="#4D6185" stroke-width="2.3"/></svg>
<svg style="left:765px;top:501px" width="17" height="11" viewBox="0 0 17 11"><defs><linearGradient id="st" x1="0" y1="0" x2="1" y2="0"><stop offset="0" stop-color="#CBD9FC"/><stop offset="1" stop-color="#B7C9F6"/></linearGradient></defs><rect x="-0.5" y="-0.5" width="18" height="10.5" rx="2.5" fill="#fff"/><rect x="0.5" y="9" width="16" height="1.4" rx="0.7" fill="#9DB6EE"/><rect x="0.2" y="0.2" width="16.6" height="8.6" rx="2.2" fill="url(#st)"/></svg>
<svg style="left:765px;top:529px" width="17" height="19" viewBox="0 0 17 19"><defs><linearGradient id="sb" x1="0" y1="0" x2="1" y2="1"><stop offset="0" stop-color="#CBD9FC"/><stop offset="1" stop-color="#B7C9F6"/></linearGradient></defs><rect x="-0.5" y="-0.5" width="18" height="18" rx="2.5" fill="#fff"/><rect x="0.2" y="0.2" width="16.6" height="16.4" rx="2.2" fill="url(#sb)"/><path d="M3.6 6.6 L8 11 L12.4 6.6" fill="none" stroke="#4D6185" stroke-width="2.3"/></svg>
<div class="t" style="top:464px;left:31px;letter-spacing:0.33px;">ชำระโดยอื่นๆ &lt;F7&gt;</div>
<div class="t" style="top:464px;left:184px;">ลงวันที่</div>
<div class="t" style="top:464px;left:292px;letter-spacing:-0.02px;">ธนาคาร</div>
<div class="t" style="top:464px;right:1069px;">จำนวนเงิน</div>
<div class="t" style="top:464px;right:952px;">ยอดคงเหลือ</div>
<div class="t" style="top:464px;right:838px;">ยอดชำระ</div>
<div class="t" style="top:486px;left:30px;letter-spacing:-0.1px;">EERE0000088</div>
<div class="t" style="top:486px;left:190px;font-size:15px;font-weight:normal;">/</div>
<div class="t" style="top:486px;left:206px;font-size:15px;font-weight:normal;">/</div>
<div class="t" style="top:486px;left:291px;">รายได้เบ็ดเตล็ด</div>
<div class="t" style="top:486px;right:1067.5px;letter-spacing:0.5px;">0.00</div>
<div class="t" style="top:486px;right:950.5px;letter-spacing:0.5px;">0.00</div>
<div class="t" style="top:486px;right:833.29px;letter-spacing:0.71px;">-3,000.00</div>
<div class="t" style="top:508px;left:30px;letter-spacing:-0.78px;">QRSSSSSSSSSS</div>
<div class="t" style="top:508px;left:184px;letter-spacing:1.8px;">11/10/56</div>
<div class="t" style="top:508px;left:255px;letter-spacing:0.53px;">01</div>
<div class="t" style="top:508px;left:291px;">ธ.กรุงเทพ จำกัด</div>
<div class="t" style="top:508px;right:1067.32px;letter-spacing:0.68px;">110,000.00</div>
<div class="t" style="top:508px;right:950.5px;letter-spacing:0.5px;">0.00</div>
<div class="t" style="top:508px;right:833.32px;letter-spacing:0.68px;">110,000.00</div>
<div style="left:814px;top:0px;width:785px;height:585px;border-radius:8px 8px 0 0;background:linear-gradient(to right,#0831D9,#0855DD 2px,#166AEE 4px,#0A5DE8);"></div>
<div style="left:814px;top:0px;width:785px;height:30px;border-radius:8px 8px 0 0;background:linear-gradient(to bottom,#0058EE 0%,#3593FF 4%,#288EFF 6%,#127DFF 8%,#036FFC 10%,#0262EE 14%,#0057E5 20%,#0054E3 24%,#0055EB 56%,#005BF5 66%,#026AFE 76%,#0062EF 86%,#0052D6 92%,#0040AB 94%,#003092 100%);"></div>
<div style="left:814px;top:4px;width:1px;height:573px;background:#0831D9;"></div>
<svg style="left:820px;top:9px" width="17" height="14" viewBox="0 0 17 14"><rect x="1" y="1.5" width="15" height="12" fill="#1A3E9E" opacity=".55"/><rect x="0" y="0" width="15" height="12" fill="#fff"/><rect x="0" y="0" width="15" height="2" fill="#3A78E0"/><rect x="0" y="0" width="15" height="1" fill="#2A50B0"/><rect x="13" y="0" width="2" height="1.6" fill="#E8703A"/></svg>
<div class="t" style="top:8px;left:840px;font-size:14px;letter-spacing:-0.79px;color:#FFFFFF;text-shadow:1px 1px 0 #0A2B8C;">RV - สมุดรายวันรับ</div>
<svg style="left:1527px;top:5px" width="21" height="21" viewBox="0 0 21 21"><defs><radialGradient id="tbmin1" cx=".3" cy=".25" r=".9"><stop offset="0" stop-color="#5A8CF8"/><stop offset=".55" stop-color="#2D62E6"/><stop offset="1" stop-color="#1D48C8"/></radialGradient></defs><rect x="0.5" y="0.5" width="20" height="20" rx="3" fill="url(#tbmin1)" stroke="#FFFFFF" stroke-width="1"/><rect x="5" y="13" width="7" height="3" fill="#FFFFFF"/></svg>
<svg style="left:1551px;top:5px" width="21" height="21" viewBox="0 0 21 21"><defs><radialGradient id="tbmax1" cx=".3" cy=".25" r=".9"><stop offset="0" stop-color="#5A8CF8"/><stop offset=".55" stop-color="#2D62E6"/><stop offset="1" stop-color="#1D48C8"/></radialGradient></defs><rect x="0.5" y="0.5" width="20" height="20" rx="3" fill="url(#tbmax1)" stroke="#FFFFFF" stroke-width="1"/><rect x="5.5" y="6.5" width="10" height="9" fill="none" stroke="#FFFFFF" stroke-width="1.2"/><rect x="5" y="5" width="11" height="3" fill="#FFFFFF"/></svg>
<svg style="left:1575px;top:5px" width="21" height="21" viewBox="0 0 21 21"><defs><radialGradient id="tbclose1" cx=".3" cy=".25" r=".9"><stop offset="0" stop-color="#E9846A"/><stop offset=".55" stop-color="#D8482A"/><stop offset="1" stop-color="#B83414"/></radialGradient></defs><rect x="0.5" y="0.5" width="20" height="20" rx="3" fill="url(#tbclose1)" stroke="#FFFFFF" stroke-width="1"/><path d="M6 6 L15 15 M15 6 L6 15" stroke="#FFFFFF" stroke-width="2.4" stroke-linecap="round"/></svg>
<div style="left:818px;top:30px;width:773px;height:545px;background:#FFE7C6;"></div>
<div style="left:818px;top:30px;width:773px;height:41px;background:#F1EFE2;"></div>
<div style="left:818px;top:30px;width:773px;height:1px;background:#FFFFFF;"></div>
<div style="left:818px;top:70px;width:773px;height:1px;background:#C9C6B6;"></div>
<div style="left:818px;top:71px;width:773px;height:1px;background:#8F8F86;"></div>
<div style="left:819px;top:72px;width:1px;height:502px;background:#8F8F86;"></div>
<div style="left:818px;top:72px;width:1px;height:503px;background:#E7E3D4;"></div>
<div style="left:818px;top:574px;width:773px;height:1px;background:#FFFFFF;"></div>
<div style="left:814px;top:575px;width:777px;height:2px;background:#0A5DE8;"></div>
<svg style="left:818px;top:30px" width="773" height="41" viewBox="3 28 773 41"><defs><linearGradient id="pg" x1="0" y1="0" x2="1" y2="1"><stop offset="0" stop-color="#FFFFFF"/><stop offset=".45" stop-color="#F6F6F6"/><stop offset="1" stop-color="#CFCFCF"/></linearGradient><linearGradient id="gr" x1="0" y1="0" x2="0" y2="1"><stop offset="0" stop-color="#5E8A5E"/><stop offset=".28" stop-color="#CFE3CF"/><stop offset=".5" stop-color="#7FA87F"/><stop offset="1" stop-color="#3F6B3F"/></linearGradient><linearGradient id="gb" x1="0" y1="0" x2="0" y2="1"><stop offset="0" stop-color="#E8F2E8"/><stop offset=".45" stop-color="#A8C8A8"/><stop offset="1" stop-color="#5C885C"/></linearGradient><radialGradient id="rx" cx=".35" cy=".3" r=".8"><stop offset="0" stop-color="#F0701A"/><stop offset=".6" stop-color="#D04E10"/><stop offset="1" stop-color="#9C3206"/></radialGradient><linearGradient id="tr" x1="0" y1="0" x2="1" y2="0"><stop offset="0" stop-color="#55544A"/><stop offset=".28" stop-color="#CFCDBF"/><stop offset=".6" stop-color="#9E9C8E"/><stop offset="1" stop-color="#4A493F"/></linearGradient><linearGradient id="tl" x1="0" y1="0" x2="0" y2="1"><stop offset="0" stop-color="#ECEADD"/><stop offset="1" stop-color="#8F8D7F"/></linearGradient></defs><path d="M12.6 38.6 H24.4 L30.4 44.6 V58.4 Q30.4 59.4 29.4 59.4 H12.6 Q11.6 59.4 11.6 58.4 V39.6 Q11.6 38.6 12.6 38.6 Z" fill="url(#pg)" stroke="#000" stroke-width="1.3"/><path d="M24.4 38.6 V44.6 H30.4 Z" fill="#F4F4F4" stroke="#9A9A9A" stroke-width=".6"/><path d="M24.4 38.6 L30.4 44.6" stroke="#000" stroke-width="1.3"/><path d="M49.6 38.6 H61.400000000000006 L67.4 44.6 V58.4 Q67.4 59.4 66.4 59.4 H49.6 Q48.6 59.4 48.6 58.4 V39.6 Q48.6 38.6 49.6 38.6 Z" fill="url(#pg)" stroke="#000" stroke-width="1.3"/><path d="M61.400000000000006 38.6 V44.6 H67.4 Z" fill="#F4F4F4" stroke="#9A9A9A" stroke-width=".6"/><path d="M61.400000000000006 38.6 L67.4 44.6" stroke="#000" stroke-width="1.3"/><path d="M47.4 49.8 L53.2 43.4 H58.6 L52.6 50.6 Z" fill="#F6F6F6" stroke="#000" stroke-width="1.1" stroke-linejoin="round"/><path d="M47.4 49.8 L52.6 50.6 V53.2 L47.4 52.4 Z" fill="#D4D4D4" stroke="#000" stroke-width="1.1" stroke-linejoin="round"/><path d="M52.6 53.2 L58.6 46 V43.4 L52.6 50.6 Z" fill="#BDBDBD" stroke="#000" stroke-width="1.1" stroke-linejoin="round"/><path d="M58.2 54.8 L67.2 45.4" stroke="#000" stroke-width="4" stroke-linecap="round"/><path d="M59.4 53.6 L67.2 45.5" stroke="#F5B914" stroke-width="2" stroke-linecap="round"/><path d="M59.8 52.6 L66.6 45.4" stroke="#FFE27A" stroke-width=".7"/><path d="M86.6 38.6 H103.4 Q104.4 38.6 104.4 39.6 V58.4 Q104.4 59.4 103.4 59.4 H86.6 Q85.6 59.4 85.6 58.4 V39.6 Q85.6 38.6 86.6 38.6 Z" fill="url(#pg)" stroke="#000" stroke-width="1.3"/><path d="M86.4 51 L99 39.2" stroke="#FF1010" stroke-width="1.5"/><path d="M91.4 58.8 L104 46.4" stroke="#FF1010" stroke-width="1.5"/><text x="95.6" y="49.4" transform="rotate(-44 95.6 49.4)" text-anchor="middle" dominant-baseline="central" font-family="'Liberation Serif',serif" font-weight="bold" font-size="8" letter-spacing=".1" fill="#000" stroke="#000" stroke-width=".25">VOID</text><path d="M122.8 47 L124.2 58.4 Q131 62.2 137.8 58.4 L139.2 47 Z" fill="url(#tr)" stroke="#35342C" stroke-width="1.4"/><path d="M125.6 49.4 L125.3 59.4" stroke="#5A594F" stroke-width="1"/><path d="M127.8 49.4 L127.5 59.4" stroke="#5A594F" stroke-width="1"/><path d="M130.0 49.4 L129.7 59.4" stroke="#5A594F" stroke-width="1"/><path d="M132.2 49.4 L132.5 59.4" stroke="#5A594F" stroke-width="1"/><path d="M134.4 49.4 L134.7 59.4" stroke="#5A594F" stroke-width="1"/><path d="M136.6 49.4 L136.9 59.4" stroke="#5A594F" stroke-width="1"/><ellipse cx="131" cy="44.4" rx="9.8" ry="4.9" fill="url(#tl)" stroke="#35342C" stroke-width="1.4"/><ellipse cx="131" cy="43" rx="7.6" ry="3" fill="#E3E1D4" opacity=".7"/><path d="M127.6 41.4 Q131 34.4 134.4 41.4" fill="#D8D6C8" stroke="#35342C" stroke-width="1.4"/><ellipse cx="131" cy="41.8" rx="2.4" ry="1.3" fill="#6E6D62"/><rect x="153" y="33" width="1" height="33" fill="#C9C6B6"/><rect x="154" y="33" width="1" height="33" fill="#FBFAF4"/><circle cx="175" cy="49" r="10.6" fill="url(#rx)" stroke="#2A0E00" stroke-width="1.2"/><path d="M171.4 45.6 L178.6 52.8 M178.6 45.6 L171.4 52.8" stroke="#fff" stroke-width="3.2" stroke-linecap="round"/><path d="M201.6 38.6 H220.4 Q221.4 38.6 221.4 39.6 V58.4 H203.6 L201.6 56.4 Z" fill="#F4F3EA" stroke="#8C8C8C" stroke-width="1.2"/><rect x="204.6" y="38.6" width="14" height="10.8" fill="#FAFAF6" stroke="#8C8C8C" stroke-width="1.1"/><path d="M206.4 41.2 H217" stroke="#8C8C8C" stroke-width="1.8"/><path d="M206.4 44.6 H217 M206.4 47.4 H217" stroke="#8C8C8C" stroke-width="1"/><rect x="205.6" y="51.4" width="12.4" height="7" fill="#FAFAF6" stroke="#8C8C8C" stroke-width="1.1"/><rect x="208.2" y="53.2" width="2.8" height="3.8" fill="#8C8C8C"/><rect x="233" y="33" width="1" height="33" fill="#C9C6B6"/><rect x="234" y="33" width="1" height="33" fill="#FBFAF4"/><path d="M249.6 48.5 L257.6 40.2 V44.4 H264.6 V52.6 H257.6 V56.8 Z" fill="url(#gr)" stroke="#000" stroke-width="1.3" stroke-linejoin="miter"/><rect x="245.2" y="40.4" width="3.3" height="16.4" fill="url(#gb)" stroke="#000" stroke-width="1.2"/><path d="M284.4 48.5 L292.6 40.2 V44.4 H299.6 V52.6 H292.6 V56.8 Z" fill="url(#gr)" stroke="#000" stroke-width="1.3" stroke-linejoin="miter"/><path d="M336.6 48.5 L328.4 40.2 V44.4 H321.2 V52.6 H328.4 V56.8 Z" fill="url(#gr)" stroke="#000" stroke-width="1.3" stroke-linejoin="miter"/><path d="M370.6 48.5 L362.4 40.2 V44.4 H355.4 V52.6 H362.4 V56.8 Z" fill="url(#gr)" stroke="#000" stroke-width="1.3" stroke-linejoin="miter"/><rect x="371.40000000000003" y="40.4" width="3.3" height="16.4" fill="url(#gb)" stroke="#000" stroke-width="1.2"/><path d="M395.6 38.6 H407.4 L413.4 44.6 V58.4 Q413.4 59.4 412.4 59.4 H395.6 Q394.6 59.4 394.6 58.4 V39.6 Q394.6 38.6 395.6 38.6 Z" fill="url(#pg)" stroke="#000" stroke-width="1.3"/><path d="M407.4 38.6 V44.6 H413.4 Z" fill="#F4F4F4" stroke="#9A9A9A" stroke-width=".6"/><path d="M407.4 38.6 L413.4 44.6" stroke="#000" stroke-width="1.3"/><circle cx="401.6" cy="48.2" r="4" fill="#D9DACB" stroke="#000" stroke-width="1.5"/><circle cx="400.6" cy="47.2" r="1.6" fill="#F6F6EE" opacity=".9"/><path d="M404.6 51.2 L409 55.4" stroke="#000" stroke-width="2.4" stroke-linecap="round"/><path d="M426 47 H432 L429 50.4 Z" fill="#000"/><rect x="440" y="33" width="1" height="33" fill="#C9C6B6"/><rect x="441" y="33" width="1" height="33" fill="#FBFAF4"/><rect x="455.6" y="38.6" width="13.4" height="11" rx="1" fill="#fff" stroke="#000" stroke-width="1.2"/><path d="M457.4 40.6 H461.4 M464 40.6 H467.2 M457.4 42.6 H460.4 M461.6 42.6 H462.4 M464 42.6 H467.2" stroke="#2A96E8" stroke-width="1"/><rect x="456.2" y="44" width="12.2" height="1.2" fill="#2A34C8"/><path d="M457.6 45.4 V48.6 M466.8 45.4 V48.6" stroke="#2A96E8" stroke-width="1"/><rect x="459.4" y="45.8" width="5.8" height="2.6" fill="#3E9CE6"/><path d="M454.4 48.6 H470.2 L473 51.6 V56 Q473 57.2 471.6 57.2 H453 Q451.6 57.2 451.6 56 V51.6 Z" fill="#F8F27E" stroke="#000" stroke-width="1.2"/><rect x="455.6" y="38.9" width="13.4" height="10.4" fill="none"/><rect x="456.2" y="46" width="12.2" height="3.2" fill="#fff" opacity="0"/><path d="M453.2 55.6 H471.4" stroke="#C7B200" stroke-width="1.6"/><rect x="454" y="51" width="16.4" height="3" rx=".6" fill="#fff" stroke="#C7B200" stroke-width=".5"/><path d="M455.4 52.5 H469.2" stroke="#C0A000" stroke-width="1" stroke-dasharray="1 .8"/><rect x="453.2" y="57.6" width="18.4" height="2" rx=".6" fill="#B86E00" stroke="#000" stroke-width=".5"/><rect x="456.2" y="47.6" width="12.2" height="2" fill="#fff"/><path d="M457.6 47.6 V49 M466.8 47.6 V49" stroke="#2A96E8" stroke-width="1"/><rect x="459.4" y="47.6" width="5.8" height="1" fill="#3E9CE6"/><path d="M484 47 H490 L487 50.4 Z" fill="#000"/><rect x="497" y="33" width="1" height="33" fill="#C9C6B6"/><rect x="498" y="33" width="1" height="33" fill="#FBFAF4"/><rect x="511" y="39" width="18" height="21" rx="2" fill="#555"/><rect x="509.6" y="38.6" width="18.4" height="20.8" rx="2" fill="url(#pg)" stroke="#000" stroke-width="1.2"/><path d="M521 40.6 H525.6 M521 42.4 H525.6" stroke="#555" stroke-width=".9"/><path d="M520 56.4 H525.6" stroke="#999" stroke-width=".8"/><rect x="506.6" y="44.6" width="20" height="10.4" fill="#A4F4F4" stroke="#000" stroke-width="1.2"/><text x="516.6" y="53.2" text-anchor="middle" font-family="'Liberation Sans',sans-serif" font-weight="bold" font-size="9.6" textLength="17.4" lengthAdjust="spacingAndGlyphs" fill="#000">Note</text><g transform="translate(-815,-2)"><rect x="1361" y="41" width="20" height="20" fill="#fff"/><rect x="1362" y="42" width="18" height="8" fill="#FFFF00"/><rect x="1362" y="52" width="18" height="8" fill="#FFFF00"/><text x="1371" y="48.6" text-anchor="middle" font-family="'Liberation Mono',monospace" font-weight="bold" font-size="7.6" textLength="17.6" lengthAdjust="spacingAndGlyphs" fill="#000">NAME</text><text x="1371" y="58.6" text-anchor="middle" font-family="'Liberation Mono',monospace" font-weight="bold" font-size="7.6" textLength="17.6" lengthAdjust="spacingAndGlyphs" fill="#000">DESC</text><rect x="1398.6" y="40.6" width="19" height="21" rx="2" fill="url(#pg)" stroke="#000" stroke-width="1.3"/><rect x="1399.2" y="47.8" width="17.8" height="8.4" fill="#FF00FF"/><rect x="1409" y="42" width="6" height="3" fill="#FF00FF"/><path d="M1400.6 43.4 H1404.4" stroke="#777" stroke-width=".9"/><path d="M1400.6 45.6 H1407.6 L1410.4 43.4 H1414.4" stroke="#000" stroke-width=".9" fill="none"/><path d="M1410.6 58.6 H1412.4 M1413.2 58.6 H1415.4" stroke="#444" stroke-width=".9"/><text x="1408.1" y="55" text-anchor="middle" font-family="'Liberation Mono',monospace" font-weight="bold" font-size="7.4" textLength="16.8" lengthAdjust="spacingAndGlyphs" fill="#000">REFER</text><rect x="1435.6" y="40.6" width="19" height="21" rx="2" fill="url(#pg)" stroke="#000" stroke-width="1.3"/><rect x="1436.2" y="42.8" width="17.8" height="7.4" fill="#00FF00"/><text x="1445.1" y="49.2" text-anchor="middle" font-family="'Liberation Mono',monospace" font-weight="bold" font-size="7.4" textLength="15.6" lengthAdjust="spacingAndGlyphs" fill="#000">POST</text><path d="M1445.1 51.6 V59.2" stroke="#AAA" stroke-width=".9"/><path d="M1438 52.4 H1440 M1450.4 52.4 H1452.4" stroke="#BBB" stroke-width=".8"/><text x="1441.6" y="58.8" text-anchor="middle" font-family="'Liberation Sans',sans-serif" font-size="8.6" fill="#000" stroke="#000" stroke-width=".3">G</text><text x="1449" y="58.8" text-anchor="middle" font-family="'Liberation Sans',sans-serif" font-size="8.6" fill="#000" stroke="#000" stroke-width=".3">L</text><path d="M1474.6 44.6 H1493.6 V63.6 H1474.6" fill="#fff" stroke="#000" stroke-width="1.1"/><path d="M1472.6 42.6 H1491.6 V62.4 H1472.6" fill="#E6E6E6" stroke="#000" stroke-width="1.1"/><rect x="1470.6" y="40.6" width="19" height="21" rx="2" fill="url(#pg)" stroke="#000" stroke-width="1.3"/><rect x="1471.2" y="42.8" width="17.8" height="7.4" fill="#FF0000"/><text x="1480.1" y="49.2" text-anchor="middle" font-family="'Liberation Mono',monospace" font-weight="bold" font-size="7.4" textLength="15.6" lengthAdjust="spacingAndGlyphs" fill="#000">POST</text><path d="M1480.1 51.6 V59.2" stroke="#AAA" stroke-width=".9"/><path d="M1473 52.4 H1475 M1485.4 52.4 H1487.4" stroke="#BBB" stroke-width=".8"/><text x="1476.6" y="58.8" text-anchor="middle" font-family="'Liberation Sans',sans-serif" font-size="8.6" fill="#000" stroke="#000" stroke-width=".3">G</text><text x="1484" y="58.8" text-anchor="middle" font-family="'Liberation Sans',sans-serif" font-size="8.6" fill="#000" stroke="#000" stroke-width=".3">L</text></g><rect x="688" y="33" width="1" height="33" fill="#C9C6B6"/><rect x="689" y="33" width="1" height="33" fill="#FBFAF4"/><ellipse cx="710.6" cy="53.2" rx="9.6" ry="5.8" fill="#fff"/><path d="M707.0 38.2 Q709.6 35.8 712.2 38.2 L713.0 40.6 H711.2 V43.2 L717.0 44.4 V45.2 H702.2 V44.4 L708.0 43.2 V40.6 H706.2 Z" fill="#000"/><rect x="709.0" y="38.4" width="1.2" height="1.2" fill="#9CC8F8"/><path d="M709.6 45.2 V48.4 M707.4 46.4 L709.6 48.6 L711.8000000000001 46.4" stroke="#0000FF" stroke-width=".9" fill="none"/><text x="710.6" y="56.8" text-anchor="middle" font-family="'Liberation Sans',sans-serif" font-size="9.2" textLength="13" lengthAdjust="spacingAndGlyphs" fill="#0000FF" stroke="#0000FF" stroke-width=".45">OK</text><ellipse cx="746.4" cy="53.4" rx="9.4" ry="5.6" fill="#808080"/><circle cx="737.8" cy="52" r="1" fill="#808080"/><circle cx="737.8" cy="55" r="1" fill="#808080"/><circle cx="755" cy="52" r="1" fill="#808080"/><circle cx="755" cy="55" r="1" fill="#808080"/><path d="M742.6 44.2 L748.6 38.2 H754.4 L748 44.2 Z" fill="#F1EFE2" stroke="#808080" stroke-width="1"/><path d="M742.6 44.2 H748 V47 H742.6 Z" fill="#D8D6CC" stroke="#808080" stroke-width="1"/><path d="M748 47 L754.4 41 V38.2" fill="none" stroke="#808080" stroke-width="1"/><text x="746.6" y="57.2" text-anchor="middle" font-family="'Liberation Sans',sans-serif" font-weight="bold" font-size="9.4" textLength="13.6" lengthAdjust="spacingAndGlyphs" fill="#EEEEEA">OK</text><path d="M742.8 57 V53.6 M741.2 54.8 L742.8 53.2 L744.4 54.8" stroke="#808080" stroke-width="1.1" fill="none"/><path d="M776.6 41.6 H795.8 V61 H776.6" fill="#fff" stroke="#000" stroke-width="1.1"/><path d="M774.6 39.6 H793.8 V59.6 H774.6" fill="#E6E6E6" stroke="#000" stroke-width="1.1"/><rect x="772.6" y="37.6" width="19" height="21" rx="1.6" fill="#C2C2C2" stroke="#000" stroke-width="1.3"/><ellipse cx="782" cy="52.6" rx="8.6" ry="5.6" fill="#fff"/><path d="M777.6 38.400000000000006 Q780.2 36.0 782.8000000000001 38.400000000000006 L783.6 40.800000000000004 H781.8000000000001 V43.400000000000006 L787.6 44.6 V45.400000000000006 H772.8000000000001 V44.6 L778.6 43.400000000000006 V40.800000000000004 H776.8000000000001 Z" fill="#000"/><rect x="779.6" y="38.6" width="1.2" height="1.2" fill="#9CC8F8"/><path d="M780.2 45.4 V48.2 M778.2 46.4 L780.2 48.4 L782.2 46.4" stroke="#0000FF" stroke-width=".9" fill="none"/><text x="782" y="56.6" text-anchor="middle" font-family="'Liberation Sans',sans-serif" font-size="9.2" textLength="13" lengthAdjust="spacingAndGlyphs" fill="#0000FF" stroke="#0000FF" stroke-width=".45">OK</text></svg>
<div class="t" style="top:107px;right:595px;">เลขที่ใบสำคัญ</div>
<div style="left:1014px;top:100px;width:107px;height:21px;background:#fff;box-shadow:inset 0 0 0 1px #000;"></div>
<div class="t" style="top:102px;left:1019px;letter-spacing:0.29px;">RE0000088</div>
<svg style="left:1122px;top:100px" width="17" height="20" viewBox="0 0 17 20"><rect x="0" y="0" width="17" height="20" fill="#C0C0C0"/><rect x="0" y="0" width="1" height="20" fill="#D6D6D6"/><rect x="0" y="19" width="17" height="1" fill="#8E8E8E"/><rect x="16" y="0" width="1" height="20" fill="#9A9A9A"/><circle cx="7.7" cy="9" r="4.6" fill="#CFCFCF" stroke="#626262" stroke-width="1.5"/><path d="M8.4 5 L11 5.8 L11.2 8 Z" fill="#fff"/><rect x="4.8" y="9.2" width="2.6" height="3.2" fill="#FAFAFA"/><path d="M11.2 12.4 L15.4 16.4" stroke="#5A5A5A" stroke-width="2.6" stroke-linecap="round"/></svg>
<div class="t" style="top:127px;right:595px;">วันที่</div>
<div style="left:1014px;top:122px;width:78px;height:21px;background:#fff;box-shadow:inset 0 0 0 1px #000;"></div>
<div class="t" style="top:124px;left:1019px;letter-spacing:1.8px;">11/10/56</div>
<svg style="left:1093px;top:122px" width="17" height="20" viewBox="0 0 17 20"><rect x="0" y="0" width="17" height="20" fill="#C0C0C0"/><rect x="0" y="0" width="1" height="20" fill="#D6D6D6"/><rect x="0" y="19" width="17" height="1" fill="#8E8E8E"/><rect x="16" y="0" width="1" height="20" fill="#9A9A9A"/><circle cx="7.7" cy="9" r="4.6" fill="#CFCFCF" stroke="#626262" stroke-width="1.5"/><path d="M8.4 5 L11 5.8 L11.2 8 Z" fill="#fff"/><rect x="4.8" y="9.2" width="2.6" height="3.2" fill="#FAFAFA"/><path d="M11.2 12.4 L15.4 16.4" stroke="#5A5A5A" stroke-width="2.6" stroke-linecap="round"/></svg>
<div class="t" style="top:148px;right:595px;">รายละเอียด</div>
<div style="left:1014px;top:145px;width:480px;height:21px;background:#fff;box-shadow:inset 0 0 0 1px #000;"></div>
<div class="t" style="top:147px;left:1139px;letter-spacing:0.35px;">ห้างหุ้นส่วนจำก<span style="font-size:21px;line-height:0;position:relative;top:2px;letter-spacing:0">•</span>AA</div>
<svg style="left:1494px;top:145px" width="17" height="20" viewBox="0 0 17 20"><rect x="0" y="0" width="17" height="20" fill="#C0C0C0"/><rect x="0" y="0" width="1" height="20" fill="#D6D6D6"/><rect x="0" y="19" width="17" height="1" fill="#8E8E8E"/><rect x="16" y="0" width="1" height="20" fill="#9A9A9A"/><circle cx="7.7" cy="9" r="4.6" fill="#CFCFCF" stroke="#626262" stroke-width="1.5"/><path d="M8.4 5 L11 5.8 L11.2 8 Z" fill="#fff"/><rect x="4.8" y="9.2" width="2.6" height="3.2" fill="#FAFAFA"/><path d="M11.2 12.4 L15.4 16.4" stroke="#5A5A5A" stroke-width="2.6" stroke-linecap="round"/></svg>
<div class="t" style="top:127px;left:1332px;letter-spacing:0.06px;">อ้างอิง</div>
<div style="left:1386px;top:122px;width:108px;height:21px;background:#fff;box-shadow:inset 0 0 0 1px #000;"></div>
<div style="left:831px;top:179px;width:755px;height:356px;background:#F1EFE2;"></div>
<div style="left:831px;top:199px;width:753px;height:335px;background:#FFFFFF;border:1px solid #9DA7A8;"></div>
<div style="left:834px;top:201px;width:748px;height:331px;background:linear-gradient(#F5F4EA,#EFEDDE);"></div>
<div style="left:1584px;top:201px;width:2px;height:334px;background:#E9E7DA;"></div>
<div style="left:833px;top:534px;width:753px;height:1px;background:#E9E7DA;"></div>
<div style="left:996px;top:181px;width:91px;height:18px;border:1px solid #919B9C;border-bottom:none;border-radius:3px 3px 0 0;background:linear-gradient(#FFFFFF,#FAFAF6 60%,#ECEBE2);"></div>
<div class="t" style="top:182px;left:1007px;font-size:11px;font-weight:normal;letter-spacing:-0.12px;">เช็คจ่าย &lt;F7&gt;</div>
<div style="left:1089px;top:181px;width:105px;height:18px;border:1px solid #919B9C;border-bottom:none;border-radius:3px 3px 0 0;background:linear-gradient(#FFFFFF,#FAFAF6 60%,#ECEBE2);"></div>
<div class="t" style="top:182px;left:1101px;font-size:11px;font-weight:normal;letter-spacing:0.02px;">เช็ครับ &lt;Ctrl+F7&gt;</div>
<div style="left:1196px;top:181px;width:91px;height:18px;border:1px solid #919B9C;border-bottom:none;border-radius:3px 3px 0 0;background:linear-gradient(#FFFFFF,#FAFAF6 60%,#ECEBE2);"></div>
<div class="t" style="top:182px;left:1207px;font-size:11px;font-weight:normal;letter-spacing:0.12px;">ภาษีซื้อ &lt;F8&gt;</div>
<div style="left:1289px;top:181px;width:113px;height:18px;border:1px solid #919B9C;border-bottom:none;border-radius:3px 3px 0 0;background:linear-gradient(#FFFFFF,#FAFAF6 60%,#ECEBE2);"></div>
<div class="t" style="top:182px;left:1300px;font-size:11px;font-weight:normal;letter-spacing:-0.13px;">ภาษีขาย &lt;Ctrl+F8&gt;</div>
<div style="left:1404px;top:181px;width:154px;height:18px;border:1px solid #919B9C;border-bottom:none;border-radius:3px 3px 0 0;background:linear-gradient(#FFFFFF,#FAFAF6 60%,#ECEBE2);"></div>
<div class="t" style="top:182px;left:1414px;font-size:11px;font-weight:normal;letter-spacing:0.01px;">ภาษีหัก ณ ที่จ่าย &lt;Ctrl+F10&gt;</div>
<div style="left:831px;top:179px;width:166px;height:22px;background:#FCFCFE;border:1px solid #919B9C;border-bottom:none;border-radius:3px 3px 0 0;"></div>
<div style="left:831px;top:179px;width:166px;height:3px;border-radius:3px 3px 0 0;background:linear-gradient(#E68B2C,#FFC73C 50%,#FFC73C);"></div>
<div class="t" style="top:181px;left:842px;font-size:11px;font-weight:normal;">รายการที่เดบิท/เครดิต &lt;Alt+E&gt;</div>
<div style="left:846px;top:203px;width:727px;height:329px;background:#FFFFFF;border:1px solid #000;"></div>
<div style="left:847px;top:204px;width:126px;height:23px;background:#F0D2B4;box-shadow:inset 1px 1px 0 rgba(255,255,255,.55);"></div>
<div style="left:974px;top:204px;width:43px;height:23px;background:#F0D2B4;box-shadow:inset 1px 1px 0 rgba(255,255,255,.55);"></div>
<div style="left:1018px;top:204px;width:134px;height:23px;background:#F0D2B4;box-shadow:inset 1px 1px 0 rgba(255,255,255,.55);"></div>
<div style="left:1153px;top:204px;width:163px;height:23px;background:#F0D2B4;box-shadow:inset 1px 1px 0 rgba(255,255,255,.55);"></div>
<div style="left:1317px;top:204px;width:116px;height:23px;background:#F0D2B4;box-shadow:inset 1px 1px 0 rgba(255,255,255,.55);"></div>
<div style="left:1434px;top:204px;width:117px;height:23px;background:#F0D2B4;box-shadow:inset 1px 1px 0 rgba(255,255,255,.55);"></div>
<div style="left:847px;top:227px;width:704px;height:1px;background:#000;"></div>
<div style="left:973px;top:204px;width:1px;height:24px;background:#000;"></div>
<div style="left:973px;top:228px;width:1px;height:288px;background:#C6C6C6;"></div>
<div style="left:1017px;top:204px;width:1px;height:24px;background:#000;"></div>
<div style="left:1017px;top:228px;width:1px;height:288px;background:#C6C6C6;"></div>
<div style="left:1152px;top:204px;width:1px;height:24px;background:#000;"></div>
<div style="left:1152px;top:228px;width:1px;height:288px;background:#C6C6C6;"></div>
<div style="left:1316px;top:204px;width:1px;height:24px;background:#000;"></div>
<div style="left:1316px;top:228px;width:1px;height:288px;background:#C6C6C6;"></div>
<div style="left:1433px;top:204px;width:1px;height:24px;background:#000;"></div>
<div style="left:1433px;top:228px;width:1px;height:288px;background:#C6C6C6;"></div>
<div style="left:864px;top:228px;width:1px;height:288px;background:#C6C6C6;"></div>
<div style="left:1550px;top:228px;width:1px;height:288px;background:#C6C6C6;"></div>
<div style="left:847px;top:251px;width:704px;height:1px;background:#C6C6C6;"></div>
<div style="left:847px;top:275px;width:704px;height:1px;background:#C6C6C6;"></div>
<div style="left:847px;top:299px;width:704px;height:1px;background:#C6C6C6;"></div>
<div style="left:847px;top:323px;width:704px;height:1px;background:#C6C6C6;"></div>
<div style="left:847px;top:347px;width:704px;height:1px;background:#C6C6C6;"></div>
<div style="left:847px;top:371px;width:704px;height:1px;background:#C6C6C6;"></div>
<div style="left:847px;top:395px;width:704px;height:1px;background:#C6C6C6;"></div>
<div style="left:847px;top:467px;width:704px;height:1px;background:#C6C6C6;"></div>
<div style="left:847px;top:491px;width:704px;height:1px;background:#C6C6C6;"></div>
<div style="left:847px;top:419px;width:704px;height:1px;background:#E3E3E3;"></div>
<div style="left:847px;top:443px;width:704px;height:1px;background:#E3E3E3;"></div>
<div style="left:847px;top:420px;width:704px;height:1px;background:#F00000;"></div>
<div style="left:847px;top:442px;width:704px;height:1px;background:#F00000;"></div>
<div style="left:973px;top:420px;width:1px;height:1px;background:#C6C6C6;"></div>
<div style="left:973px;top:442px;width:1px;height:1px;background:#C6C6C6;"></div>
<div style="left:1017px;top:420px;width:1px;height:1px;background:#C6C6C6;"></div>
<div style="left:1017px;top:442px;width:1px;height:1px;background:#C6C6C6;"></div>
<div style="left:1152px;top:420px;width:1px;height:1px;background:#C6C6C6;"></div>
<div style="left:1152px;top:442px;width:1px;height:1px;background:#C6C6C6;"></div>
<div style="left:1316px;top:420px;width:1px;height:1px;background:#C6C6C6;"></div>
<div style="left:1316px;top:442px;width:1px;height:1px;background:#C6C6C6;"></div>
<div style="left:1433px;top:420px;width:1px;height:1px;background:#C6C6C6;"></div>
<div style="left:1433px;top:442px;width:1px;height:1px;background:#C6C6C6;"></div>
<div style="left:864px;top:420px;width:1px;height:1px;background:#C6C6C6;"></div>
<div style="left:864px;top:442px;width:1px;height:1px;background:#C6C6C6;"></div>
<div style="left:847px;top:516px;width:704px;height:15px;background:#B1AE9F;"></div>
<div style="left:1551px;top:204px;width:21px;height:327px;background:#FDFDFB;"></div>
<svg style="left:1553px;top:205px" width="17" height="19" viewBox="0 0 17 19"><defs><linearGradient id="sb" x1="0" y1="0" x2="1" y2="1"><stop offset="0" stop-color="#CBD9FC"/><stop offset="1" stop-color="#B7C9F6"/></linearGradient></defs><rect x="-0.5" y="-0.5" width="18" height="18" rx="2.5" fill="#fff"/><rect x="0.5" y="17" width="16" height="1.4" rx="0.7" fill="#9DB6EE"/><rect x="0.2" y="0.2" width="16.6" height="16.4" rx="2.2" fill="url(#sb)"/><path d="M3.6 10 L8 5.6 L12.4 10" fill="none" stroke="#4D6185" stroke-width="2.3"/></svg>
<svg style="left:1553px;top:341px" width="17" height="56" viewBox="0 0 17 56"><defs><linearGradient id="st" x1="0" y1="0" x2="1" y2="0"><stop offset="0" stop-color="#CBD9FC"/><stop offset="1" stop-color="#B7C9F6"/></linearGradient></defs><rect x="-0.5" y="-0.5" width="18" height="55.5" rx="2.5" fill="#fff"/><rect x="0.5" y="54" width="16" height="1.4" rx="0.7" fill="#9DB6EE"/><rect x="0.2" y="0.2" width="16.6" height="53.6" rx="2.2" fill="url(#st)"/><rect x="5.5" y="23.5" width="6" height="1" fill="#EEF4FE"/><rect x="6" y="24.5" width="6" height="0.8" fill="#8CB0F8"/><rect x="5.5" y="25.5" width="6" height="1" fill="#EEF4FE"/><rect x="6" y="26.5" width="6" height="0.8" fill="#8CB0F8"/><rect x="5.5" y="27.5" width="6" height="1" fill="#EEF4FE"/><rect x="6" y="28.5" width="6" height="0.8" fill="#8CB0F8"/><rect x="5.5" y="29.5" width="6" height="1" fill="#EEF4FE"/><rect x="6" y="30.5" width="6" height="0.8" fill="#8CB0F8"/></svg>
<svg style="left:1553px;top:513px" width="17" height="19" viewBox="0 0 17 19"><defs><linearGradient id="sb" x1="0" y1="0" x2="1" y2="1"><stop offset="0" stop-color="#CBD9FC"/><stop offset="1" stop-color="#B7C9F6"/></linearGradient></defs><rect x="-0.5" y="-0.5" width="18" height="18" rx="2.5" fill="#fff"/><rect x="0.2" y="0.2" width="16.6" height="16.4" rx="2.2" fill="url(#sb)"/><path d="M3.6 6.6 L8 11 L12.4 6.6" fill="none" stroke="#4D6185" stroke-width="2.3"/></svg>
<div class="t" style="top:208px;left:870px;letter-spacing:0.3px;">เลขที่บัญชี</div>
<div class="t" style="top:208px;left:979px;letter-spacing:0.41px;">แผนก</div>
<div class="t" style="top:208px;left:1023px;">ชื่อบัญชี</div>
<div class="t" style="top:208px;left:1218px;letter-spacing:0.15px;">คำอธิบาย</div>
<div class="t" style="top:208px;left:1358px;letter-spacing:0.57px;">เดบิท</div>
<div class="t" style="top:208px;left:1473px;">เครดิต</div>
<div class="t" style="top:232px;left:870px;letter-spacing:0.83px;">1130-02</div>
<div class="t" style="top:232px;left:1022px;">เช็ครับลงวันที่ล่วงหน้า</div>
<div class="t" style="top:232px;right:279px;">ห้างหุ้</div>
<div class="t" style="top:232px;right:161.82px;letter-spacing:0.68px;">110,000.00</div>
<div class="t" style="top:256px;left:870px;letter-spacing:0.71px;">4200-08</div>
<div class="t" style="top:256px;left:1022px;">รายได้อื่น ๆ</div>
<div class="t" style="top:256px;right:279px;">ห้างหุ้</div>
<div class="t" style="top:256px;right:44.23px;letter-spacing:0.77px;">3,000.00</div>
<div class="t" style="top:280px;left:870px;letter-spacing:0.83px;">1130-01</div>
<div class="t" style="top:280px;left:1022px;">ลูกหนี้การค้า</div>
<div class="t" style="top:280px;right:279px;">ห้างหุ้</div>
<div class="t" style="top:280px;right:44.4px;letter-spacing:0.6px;">107,000.00</div>
<div class="t" style="top:545px;left:1282px;letter-spacing:0.57px;">รวม</div>
<div style="left:1318px;top:542px;width:117px;height:21px;background:#fff;box-shadow:inset 0 0 0 1px #000;"></div>
<div class="t" style="top:544px;right:158.32px;letter-spacing:0.68px;">110,000.00</div>
<div style="left:1437px;top:542px;width:117px;height:21px;background:#fff;box-shadow:inset 0 0 0 1px #000;"></div>
<div class="t" style="top:544px;right:39.32px;letter-spacing:0.68px;">110,000.00</div>
</div></body></html>
